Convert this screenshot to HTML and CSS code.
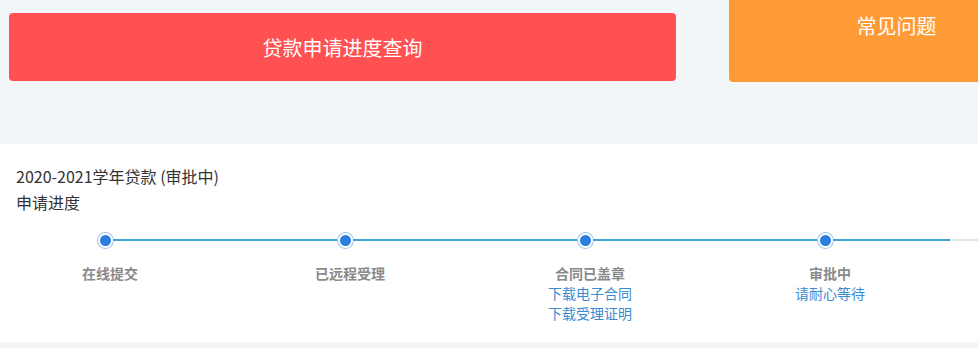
FILE: index.html
```html
<!DOCTYPE html>
<html lang="zh-CN">
<head>
<meta charset="utf-8">
<title>贷款申请进度查询</title>
<link rel="stylesheet" href="styles.css">
</head>
<body>
<div class="page">
  <div class="top">
    <div class="btn-main">贷款申请进度查询</div>
    <div class="btn-faq">常见问题</div>
  </div>
  <div class="panel">
    <div class="panel-head">
      <div class="title">2020-2021学年贷款 (审批中)</div>
      <div class="title">申请进度</div>
    </div>
    <div class="steps">
      <div class="step">
        <div class="track"><span class="seg seg-l none"></span><span class="dot"></span><span class="seg seg-r"></span></div>
        <div class="label">
          <div class="name">在线提交</div>
        </div>
      </div>
      <div class="step">
        <div class="track"><span class="seg seg-l"></span><span class="dot"></span><span class="seg seg-r"></span></div>
        <div class="label">
          <div class="name">已远程受理</div>
        </div>
      </div>
      <div class="step">
        <div class="track"><span class="seg seg-l"></span><span class="dot"></span><span class="seg seg-r"></span></div>
        <div class="label">
          <div class="name">合同已盖章</div>
          <a class="link">下载电子合同</a>
          <a class="link">下载受理证明</a>
        </div>
      </div>
      <div class="step">
        <div class="track"><span class="seg seg-l"></span><span class="dot"></span><span class="seg seg-r"></span></div>
        <div class="label">
          <div class="name">审批中</div>
          <a class="link">请耐心等待</a>
        </div>
      </div>
      <div class="step step-tail">
        <div class="track"><span class="seg seg-r grey"></span></div>
      </div>
    </div>
  </div>
</div>
</body>
</html>
```
FILE: styles.css
```css
html, body {
  margin: 0;
  padding: 0;
  background: #f2f6f9;
}
body {
  font-family: "Noto Sans CJK SC", "Noto Sans", sans-serif;
  color: #333;
}
.page {
  width: 978px;
  overflow: hidden;
}
.top {
  display: grid;
  grid-template-columns: 667px 1fr;
  column-gap: 53px;
  padding-left: 9px;
  height: 144px;
  align-items: start;
}
.btn-main {
  margin-top: 13px;
  height: 68px;
  background: #ff5151;
  border-radius: 4px;
  color: #fff;
  font-size: 20px;
  display: flex;
  align-items: center;
  justify-content: center;
}
.btn-faq {
  height: 82px;
  background: #ff9b37;
  border-radius: 0 0 0 4px;
  color: #fff;
  font-size: 20px;
  line-height: 26px;
  padding: 13px 0 0 86px;
  box-sizing: border-box;
  text-align: center;
}
.panel {
  background: #fff;
  height: 198px;
}
.panel-head {
  padding: 19px 16px 0;
}
.title {
  font-size: 16px;
  line-height: 26px;
  color: #333;
}
.steps {
  display: flex;
  margin-left: -10px;
  margin-top: 17px;
}
.step {
  flex: 0 0 240px;
  width: 240px;
}
.step.step-tail {
  flex: 1 1 auto;
  width: auto;
  min-width: 0;
}
.track {
  display: flex;
  align-items: center;
  height: 16px;
}
.seg {
  height: 2px;
  background: #3aa9d2;
}
.seg-l {
  width: calc(50% - 13px);
  flex: none;
}
.seg-r {
  flex: 1;
}
.seg.none {
  background: transparent;
}
.seg.grey {
  background: #e6e6e6;
}
.dot {
  width: 11px;
  height: 11px;
  border-radius: 50%;
  background: #2b7de0;
  border: 2px solid #fff;
  box-shadow: 0 0 0 1px #9fc3ee;
  flex: none;
  margin: 0 0.5px;
}
.label {
  margin-top: 15px;
  text-align: center;
  font-size: 14px;
  line-height: 20px;
}
.name {
  color: #8a8a8a;
  font-weight: 700;
}
.link {
  display: block;
  color: #3a8bd2;
  text-decoration: none;
}
```
